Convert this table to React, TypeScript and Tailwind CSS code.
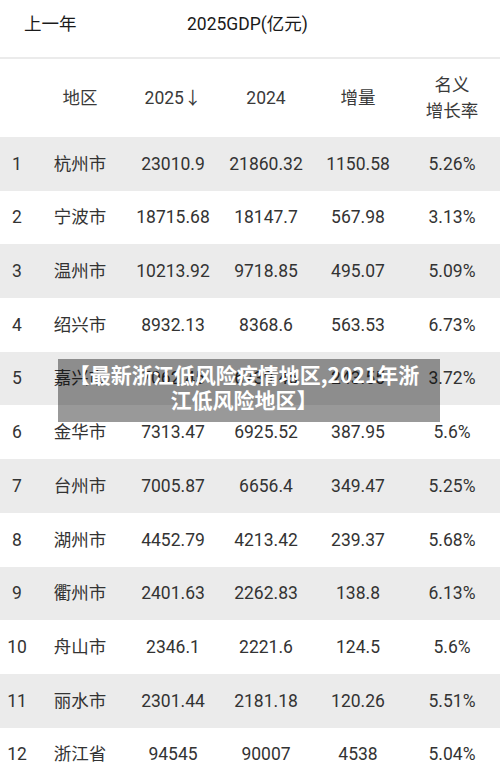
import React from "react";

const rows: [string, string, string, string, string, string][] = [
  ["1", "杭州市", "23010.9", "21860.32", "1150.58", "5.26%"],
  ["2", "宁波市", "18715.68", "18147.7", "567.98", "3.13%"],
  ["3", "温州市", "10213.92", "9718.85", "495.07", "5.09%"],
  ["4", "绍兴市", "8932.13", "8368.6", "563.53", "6.73%"],
  ["5", "嘉兴市", "7062.45", "6739.45", "243.55", "3.72%"],
  ["6", "金华市", "7313.47", "6925.52", "387.95", "5.6%"],
  ["7", "台州市", "7005.87", "6656.4", "349.47", "5.25%"],
  ["8", "湖州市", "4452.79", "4213.42", "239.37", "5.68%"],
  ["9", "衢州市", "2401.63", "2262.83", "138.8", "6.13%"],
  ["10", "舟山市", "2346.1", "2221.6", "124.5", "5.6%"],
  ["11", "丽水市", "2301.44", "2181.18", "120.26", "5.51%"],
  ["12", "浙江省", "94545", "90007", "4538", "5.04%"],
];

const grid = "grid grid-cols-[34px_92px_94px_92px_92px_96px]";

export default function App() {
  return (
    <div
      className="relative w-[500px] h-[781px] overflow-hidden bg-white text-[17.5px]"
      style={{ fontFamily: 'Roboto, "Noto Sans CJK SC", sans-serif' }}
    >
      <div className="flex h-[57px] pt-[12px] leading-[24px] text-[#1a1a1a]">
        <span className="pl-[24px] w-[187px]">上一年</span>
        <span>2025GDP(亿元)</span>
      </div>
      <div className="h-[2px] bg-[#ebebeb]" />
      <div className={`${grid} h-[78px] items-center text-[#3a3a3a] leading-[26px]`}>
        <span />
        <span className="text-center">地区</span>
        <span className="text-center">2025↓</span>
        <span className="text-center">2024</span>
        <span className="text-center">增量</span>
        <span className="text-center">
          名义
          <br />
          增长率
        </span>
      </div>
      {rows.map((r, i) => (
        <div
          key={r[0]}
          className={`${grid} h-[53.7px] items-center text-[#333333] ${
            i % 2 === 0 ? "bg-[#ebebeb]" : "bg-white"
          }`}
        >
          <span className="text-center">{r[0]}</span>
          <span className="text-center">{r[1]}</span>
          <span className="text-center">{r[2]}</span>
          <span className="text-center">{r[3]}</span>
          <span className="text-center">{r[4]}</span>
          <span className="text-center">{r[5]}</span>
        </div>
      ))}
      <div
        className="absolute left-[58px] top-[359px] w-[382px] h-[63px] bg-black/40 pt-[3px] pl-[4px] pr-[14px] text-center text-white font-bold text-[21px] leading-[25px] whitespace-nowrap"
        style={{ fontFamily: '"Noto Sans CJK SC", sans-serif' }}
      >
        【最新浙江低风险疫情地区,2021年浙
        <br />
        江低风险地区】
      </div>
    </div>
  );
}
